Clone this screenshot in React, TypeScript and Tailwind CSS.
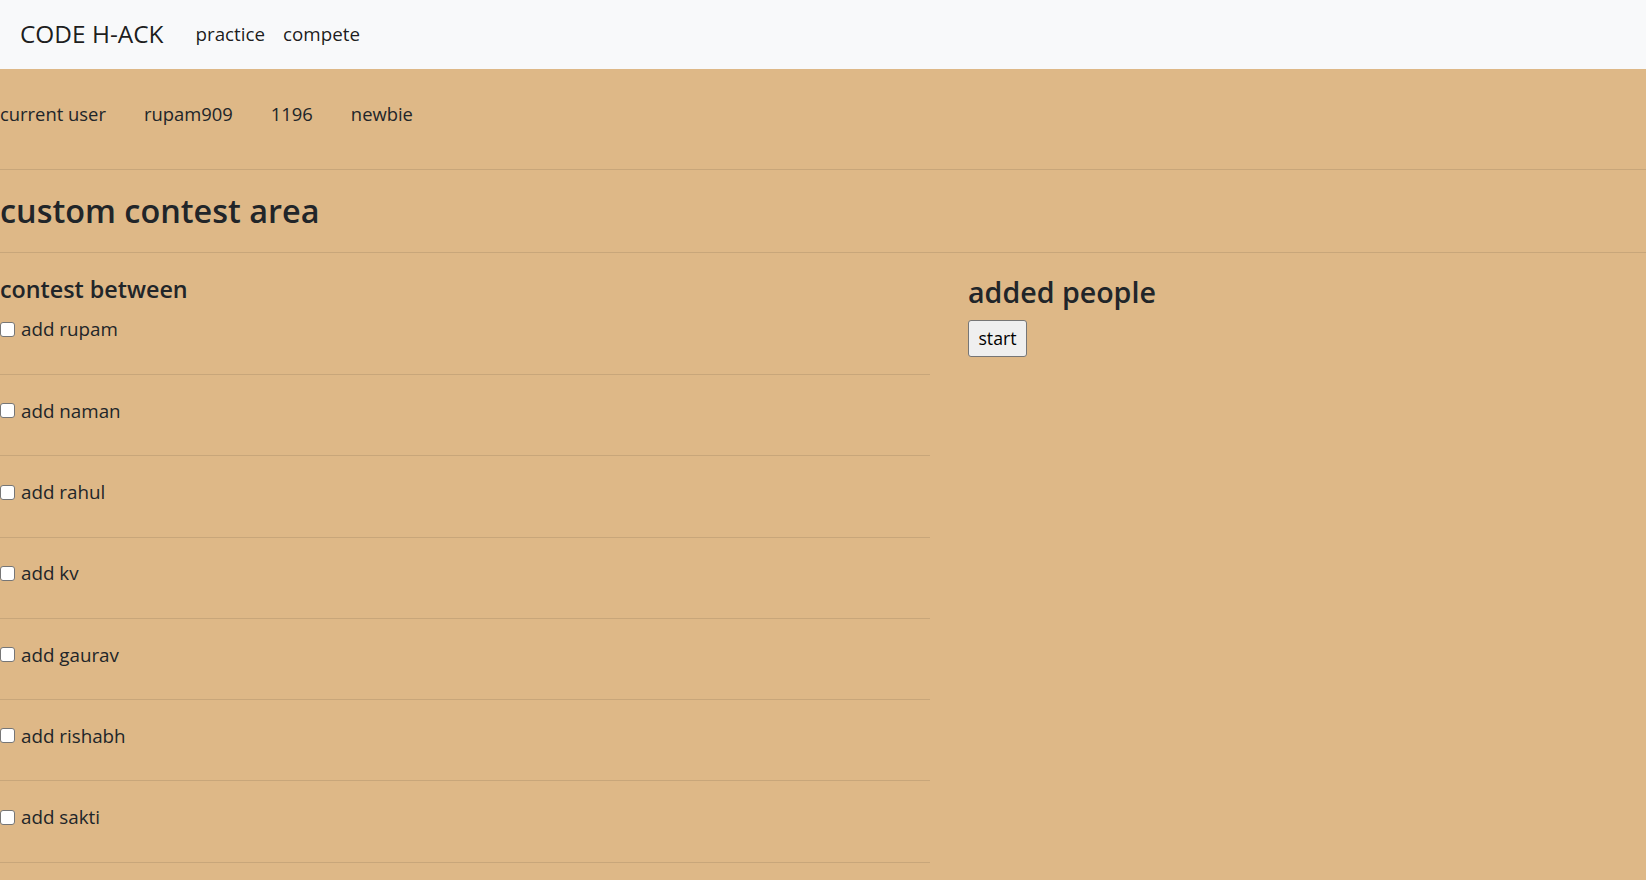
const people = ["rupam", "naman", "rahul", "kv", "gaurav", "rishabh", "sakti"];

function Rule() {
  return <div className="h-px bg-[#c8a67a]" />;
}

export default function App() {
  return (
    <div className="min-h-[880px] bg-[#deb887] font-['Open_Sans',sans-serif] text-[#212529]">
      <nav className="flex h-[69px] items-center bg-[#f8f9fa] pl-[20px]">
        <span className="text-[24.4px] leading-none text-black/90">CODE H-ACK</span>
        <a className="ml-[32px] text-[18.8px] leading-none text-black/90">practice</a>
        <a className="ml-[18px] text-[18.8px] leading-none text-black/90">compete</a>
      </nav>

      <div className="flex h-[100px] gap-[38px] pt-[31px] text-[18.4px] leading-[27.6px]">
        <span>current user</span>
        <span>rupam909</span>
        <span>1196</span>
        <span>newbie</span>
      </div>
      <Rule />

      <h2 className="pt-[21.1px] pb-[22px] text-[32.4px] font-semibold leading-[38.9px]">custom contest area</h2>
      <Rule />

      <div className="flex">
        <div className="w-[930px]">
          <h4 className="mt-[22.2px] text-[23.3px] font-semibold leading-[28px]">contest between</h4>
          {people.map((name, i) => (
            <div key={name}>
              <label
                className={
                  "flex h-[26px] items-center gap-[6px] text-[18.8px] " +
                  (i === 0 ? "mt-[13.3px] mb-[31.5px]" : "mt-[22.8px] mb-[31.5px]")
                }
              >
                <input
                  type="checkbox"
                  className="h-[15px] w-[15px] shrink-0 appearance-none rounded-[3px] border border-[#767676] bg-white"
                />
                <span>add {name}</span>
              </label>
              <Rule />
            </div>
          ))}
        </div>

        <div className="ml-[38px]">
          <h3 className="mt-[21.9px] text-[28.6px] font-semibold leading-[34.3px]">added people</h3>
          <button className="mt-[10.8px] h-[37px] w-[59px] rounded-[3px] border border-[#767676] bg-[#efefef] text-[17.7px] text-black">
            start
          </button>
        </div>
      </div>
    </div>
  );
}
